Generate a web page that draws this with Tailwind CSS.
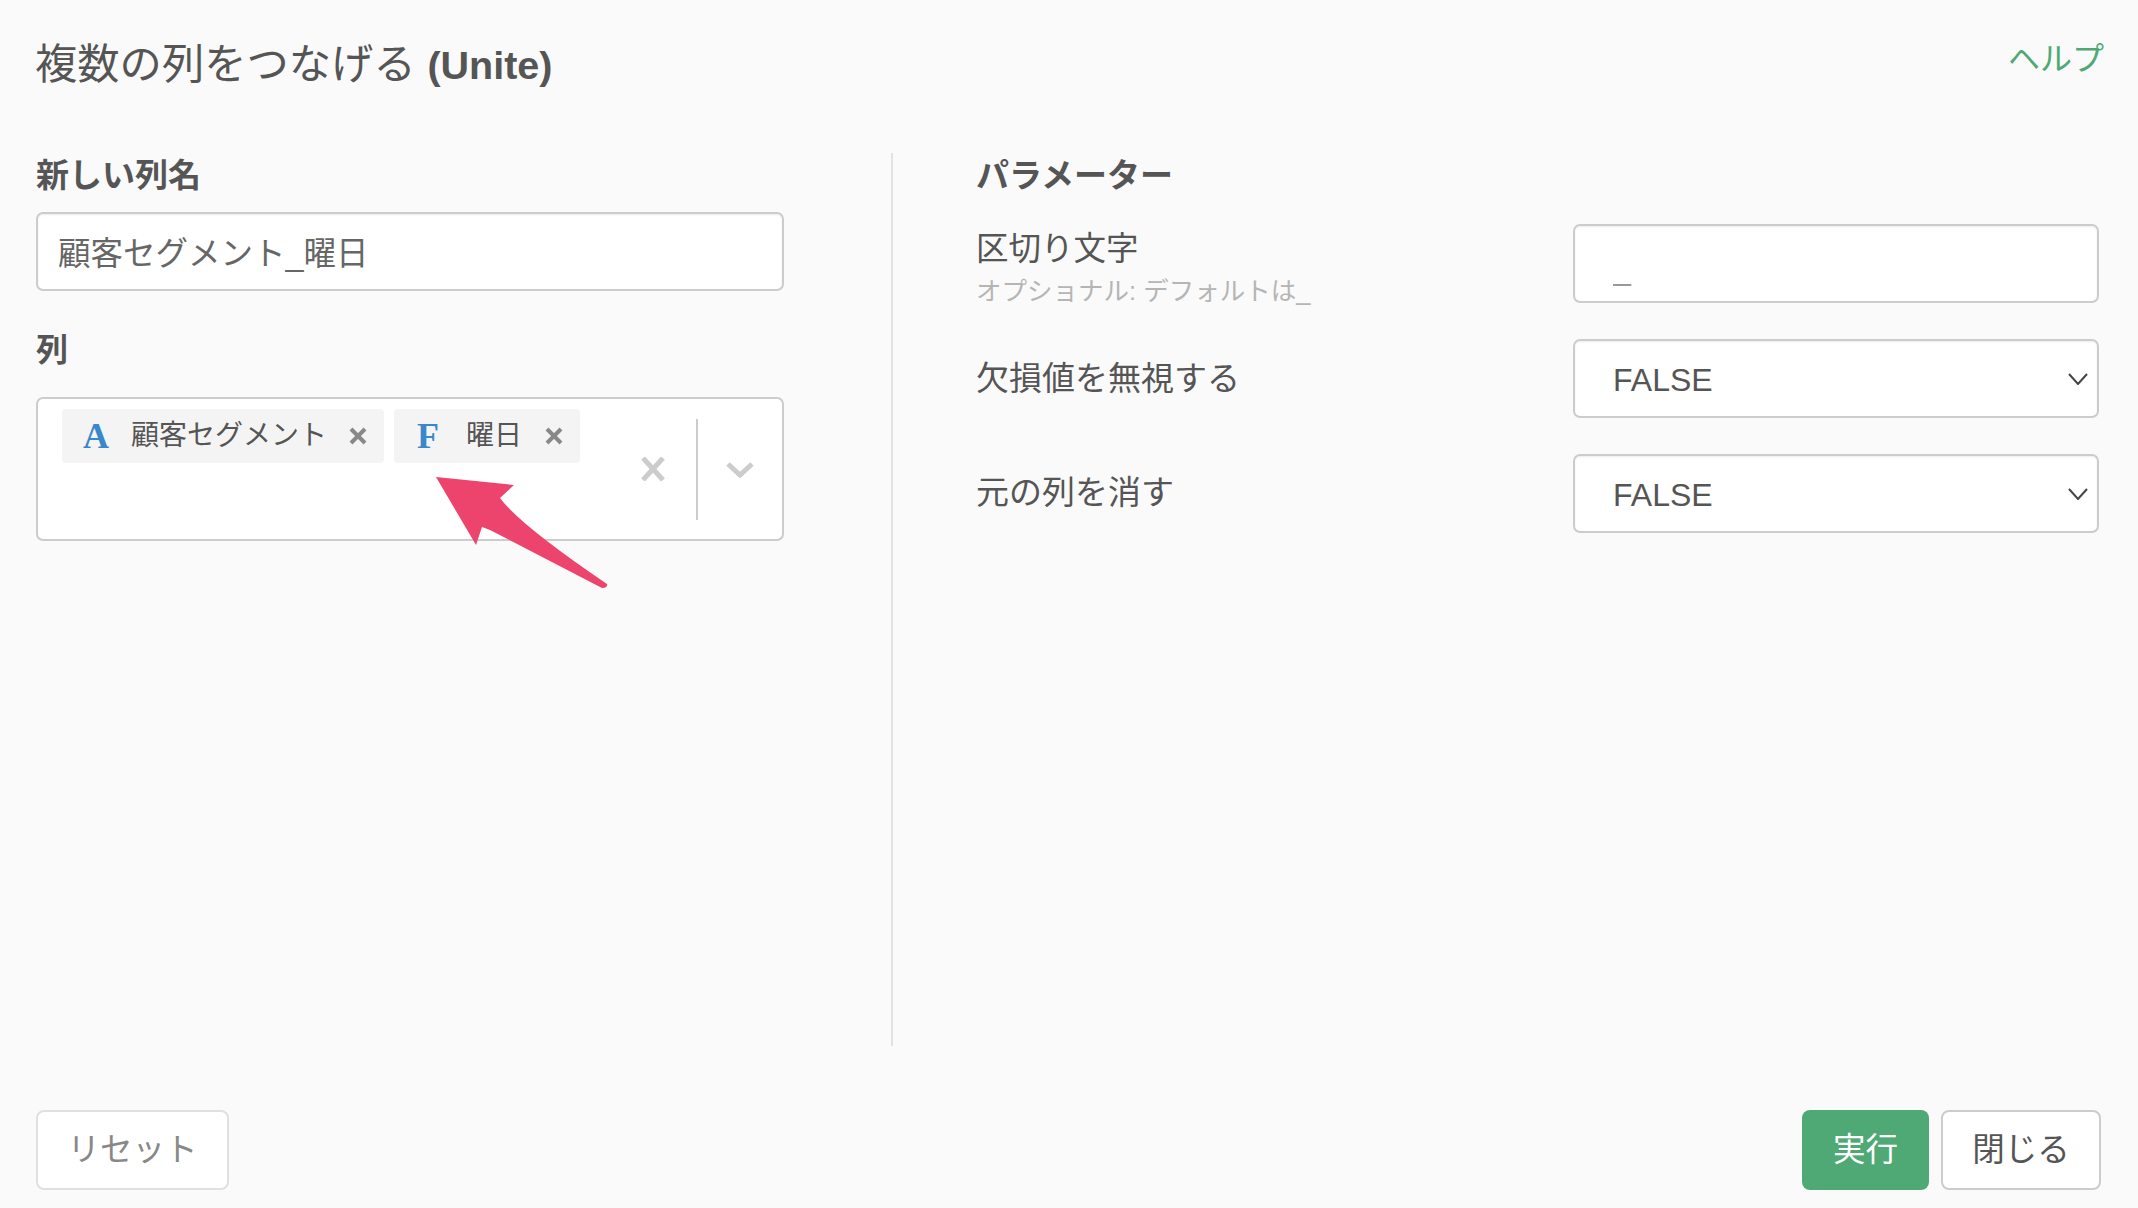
<!DOCTYPE html>
<html lang="ja">

<head>
  <meta charset="UTF-8">
  <title>Unite</title>
  <script src="https://cdn.jsdelivr.net/npm/@tailwindcss/browser@4"></script>
</head>

<body class="bg-[#fafafa] text-[#555] font-['Liberation_Sans','Noto_Sans_CJK_JP',sans-serif]">
  <div class="relative flex flex-col w-[2138px] h-[1208px] overflow-hidden">
    <!-- Header -->
    <div class="flex justify-between h-[153px] pl-[35px] pr-[34px]">
      <h1 class="mt-[39px] text-[42.3px] leading-[52px] text-[#555]">複数の列をつなげる <span class="font-bold text-[#555] text-[39.5px]">(Unite)</span></h1>
      <a class="mt-[37px] text-[32px] leading-[44px] text-[#4fa974]">ヘルプ</a>
    </div>

    <!-- Body -->
    <div class="flex h-[893px]">
      <!-- Left column -->
      <div class="w-[893px] pl-[36px] border-r-2 border-[#e2e2e2]">
        <label class="block mt-[1px] text-[33px] leading-[44px] font-bold">新しい列名</label>
        <input type="text" value="顧客セグメント_曜日"
          class="block w-[748px] h-[79px] mt-[14px] px-[20px] pb-[3px] bg-white border-2 border-[#ccc] rounded-[7px] shadow-[inset_0_1px_2px_rgba(0,0,0,0.08)] text-[32.5px] text-[#666]">

        <label class="block mt-[37px] text-[32px] leading-[44px] font-bold">列</label>
        <div class="flex items-start w-[748px] h-[144px] mt-[25px] pl-[24px] pt-[10px] bg-white border-2 border-[#ccc] rounded-[7px]">
          <div class="flex gap-[10px]">
            <div class="flex items-center w-[322px] h-[54px] pl-[21px] bg-[#f4f4f4] rounded-[4px]">
              <span class="w-[48px] font-['Liberation_Serif',serif] font-bold text-[36px] text-[#3a87cc]">A</span>
              <span class="text-[28px] leading-[40px] whitespace-nowrap">顧客セグメント</span>
              <svg class="ml-[22px]" width="18" height="18" viewBox="0 0 18 18" fill="none" stroke="#888" stroke-width="4"><path d="M2 2l14 14M16 2L2 16" /></svg>
            </div>
            <div class="flex items-center w-[186px] h-[54px] pl-[23px] bg-[#f4f4f4] rounded-[4px]">
              <span class="w-[49px] font-['Liberation_Serif',serif] font-bold text-[36px] text-[#3a87cc]">F</span>
              <span class="text-[28px] leading-[40px] whitespace-nowrap">曜日</span>
              <svg class="ml-[23px]" width="18" height="18" viewBox="0 0 18 18" fill="none" stroke="#888" stroke-width="4"><path d="M2 2l14 14M16 2L2 16" /></svg>
            </div>
          </div>
          <svg class="mt-[48px] ml-[61px]" width="24" height="24" viewBox="0 0 24 24" fill="none" stroke="#ccc" stroke-width="5"><path d="M2 1l20 22M22 1L2 23" /></svg>
          <div class="w-[2px] h-[101px] mt-[10px] ml-[31px] bg-[#ccc]"></div>
          <svg class="mt-[53px] ml-[28px]" width="28" height="16" viewBox="0 0 28 16" fill="none" stroke="#ccc" stroke-width="5"><path d="M2 2l12 11L26 2" /></svg>
        </div>
      </div>

      <!-- Right column -->
      <div class="w-[1206px] pl-[83px]">
        <div class="mt-[1px] text-[33px] leading-[44px] font-bold">パラメーター</div>
        <div class="flex justify-between items-start mt-[26px]">
          <div>
            <div class="mt-[3px] text-[32.5px] leading-[44px]">区切り文字</div>
            <div class="mt-[2px] text-[25.5px] leading-[36px] text-[#b5b5b5]">オプショナル: デフォルトは_</div>
          </div>
          <input type="text" value="_"
            class="block w-[526px] h-[79px] px-[38px] pt-[12px] bg-white border-2 border-[#ccc] rounded-[7px] shadow-[inset_0_1px_2px_rgba(0,0,0,0.08)] text-[32px] text-[#999]">
        </div>
        <div class="flex justify-between items-center mt-[30px]">
          <div class="text-[33px] leading-[44px]">欠損値を無視する</div>
          <div class="flex justify-between items-center w-[526px] h-[79px] pl-[38px] pr-[9px] bg-white border-2 border-[#ccc] rounded-[7px] shadow-[inset_0_1px_2px_rgba(0,0,0,0.08)]">
            <span class="pt-[2px] text-[32px] text-[#555]">FALSE</span>
            <svg width="20" height="12" viewBox="0 0 20 12" fill="none" stroke="#444" stroke-width="2"><path d="M1 1l9 10 9-10" /></svg>
          </div>
        </div>
        <div class="flex justify-between items-center mt-[36px]">
          <div class="text-[33px] leading-[44px] -mt-[2px]">元の列を消す</div>
          <div class="flex justify-between items-center w-[526px] h-[79px] pl-[38px] pr-[9px] bg-white border-2 border-[#ccc] rounded-[7px] shadow-[inset_0_1px_2px_rgba(0,0,0,0.08)]">
            <span class="pt-[2px] text-[32px] text-[#555]">FALSE</span>
            <svg width="20" height="12" viewBox="0 0 20 12" fill="none" stroke="#444" stroke-width="2"><path d="M1 1l9 10 9-10" /></svg>
          </div>
        </div>
      </div>
    </div>

    <!-- Footer -->
    <div class="flex justify-between items-start pt-[64px] pl-[36px] pr-[37px]">
      <button class="w-[193px] h-[80px] bg-white border-2 border-[#e0e0e0] rounded-[8px] text-[32.5px] text-[#888]">リセット</button>
      <div class="flex gap-[12px]">
        <button class="w-[127px] h-[80px] bg-[#4ea975] rounded-[8px] text-[32.5px] text-white">実行</button>
        <button class="w-[160px] h-[80px] bg-white border-2 border-[#ccc] rounded-[8px] text-[32.5px] text-[#555]">閉じる</button>
      </div>
    </div>

    <!-- Annotation arrow -->
    <svg class="absolute left-0 top-0 pointer-events-none" width="2138" height="1208" viewBox="0 0 2138 1208">
      <path d="M436 477L514 485L500 498Q520 525 607 584Q608 588 602 588L490 530L482 527L476 545Z" fill="#ec446d" />
    </svg>
  </div>
</body>

</html>
